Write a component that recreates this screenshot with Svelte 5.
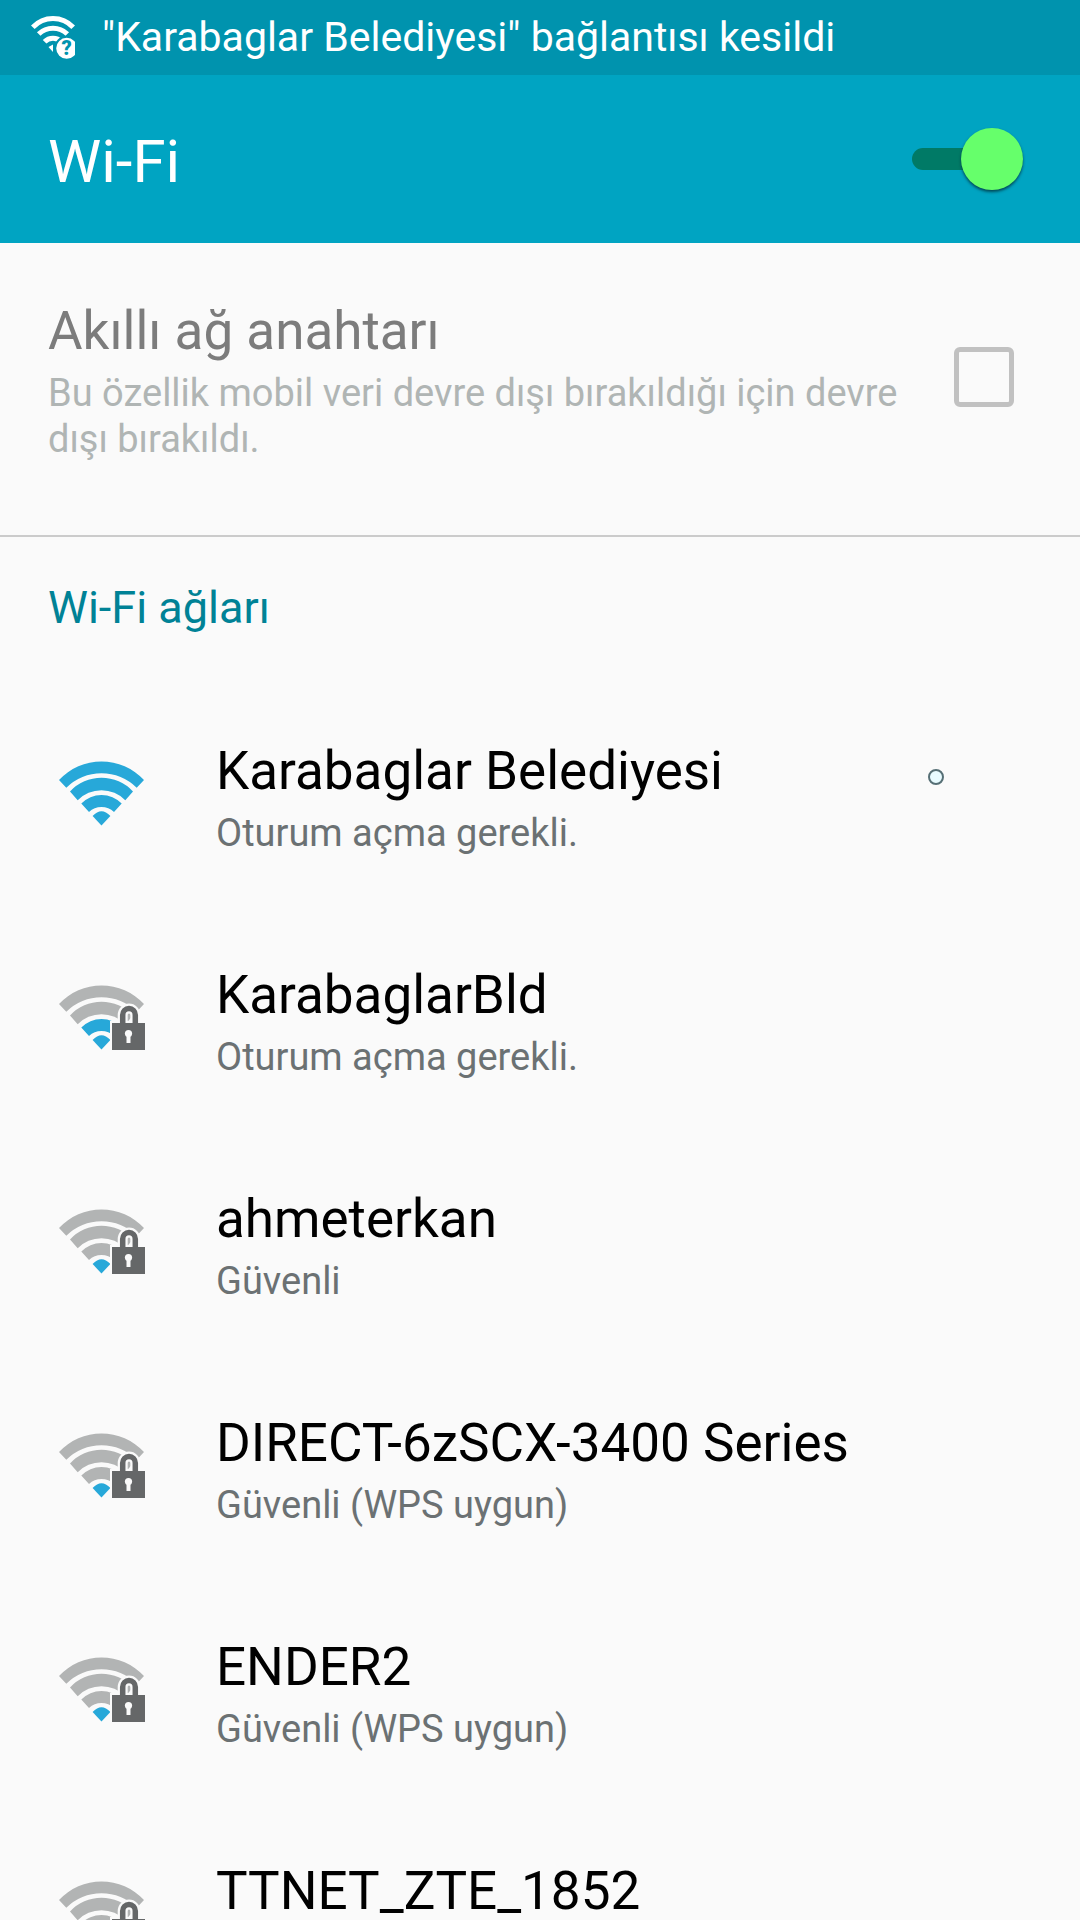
<script lang="ts">
  type Network = {
    name: string,
    status?: string,
    level: number,
    locked: boolean,
    busy?: boolean };

  const networks: Network[] = [
    { name: 'Karabaglar Belediyesi', status: 'Oturum açma gerekli.', level: 4, locked: false, busy: true },
    { name: 'KarabaglarBld', status: 'Oturum açma gerekli.', level: 2, locked: true },
    { name: 'ahmeterkan', status: 'Güvenli', level: 1, locked: true },
    { name: 'DIRECT-6zSCX-3400 Series', status: 'Güvenli (WPS uygun)', level: 1, locked: true },
    { name: 'ENDER2', status: 'Güvenli (WPS uygun)', level: 1, locked: true },
    { name: 'TTNET_ZTE_1852', level: 1, locked: true },
  ];

  // signal segments, weakest first
  const segments = [
    'M42.5 64.5 L33.6 55 Q42.5 45.5 51.4 55 Z',
    'M22.3 42.5 A28 28 0 0 1 62.7 42.5 L55 51 A18 18 0 0 0 30 51 Z',
    'M11 30.5 A43 43 0 0 1 74 30.5 L66.3 39.3 A33 33 0 0 0 18.7 39.3 Z',
    'M0 19 A58 58 0 0 1 85 19 L77.7 26.8 A50 50 0 0 0 7.3 26.8 Z',
  ];

  let wifiOn = $state(true);
</script>

<div class="screen" lang="tr">
  <div class="ticker" role="status">
    <svg class="ticker-icon" viewBox="0 0 44 44" aria-hidden="true">
      <g fill="none" stroke="#fff" stroke-width="5">
        <path d="M1.8 11.3 A27.6 27.6 0 0 1 42.2 11.3" />
        <path d="M7.7 18 A20.5 20.5 0 0 1 36.3 18" />
        <path d="M13.6 25.8 A11.5 11.5 0 0 1 30.4 25.8" />
      </g>
      <path d="M17.5 31 L22 28.5 V36 Z" fill="#fff" />
      <circle cx="35.7" cy="32.3" r="11.5" fill="#fff" stroke="#0093ae" stroke-width="2" />
      <text x="35.7" y="39.4" text-anchor="middle">?</text>
    </svg>
    <span>"Karabaglar Belediyesi" bağlantısı kesildi</span>
  </div>

  <header>
    <h1><label for="wifi">Wi-Fi</label></h1>
    <input id="wifi" class="switch" type="checkbox" role="switch" bind:checked={wifiOn} />
  </header>

  <main>
    <div class="preference">
      <label class="text" for="smart">
        <span class="title">Akıllı ağ anahtarı</span>
        <span class="summary">Bu özellik mobil veri devre dışı bırakıldığı için devre dışı bırakıldı.</span>
      </label>
      <input id="smart" class="box" type="checkbox" disabled />
    </div>

    <h2>Wi-Fi ağları</h2>

    <ul>
      {#each networks as network}
        <li>
          <button class="network">
            <svg class="signal" viewBox="0 0 88 66" aria-hidden="true">
              {#each segments as d, i}
                <path {d} fill={i < network.level ? '#27a8d9' : '#b2b4b4'} />
              {/each}
              {#if network.locked}
                <g stroke="#fafafa" fill="none">
                  <path d="M63.7 39 V30 A6.3 6.5 0 0 1 76.3 30 V39" stroke-width="10" />
                  <path d="M53 38 H86 V65 H53 Z" fill="#fafafa" stroke-width="4" />
                </g>
                <path d="M63.7 39 V30 A6.3 6.5 0 0 1 76.3 30 V39" fill="none" stroke="#656768" stroke-width="5.5" />
                <path d="M53 38 H86 V65 H53 Z" fill="#656768" />
                <circle cx="69.5" cy="48.5" r="3.6" fill="#fafafa" />
                <path d="M67.5 49 H71.5 V58 H67.5 Z" fill="#fafafa" />
              {/if}
            </svg>
            <span class="text">
              <span class="title">{network.name}</span>
              {#if network.status}
                <span class="summary">{network.status}</span>
              {/if}
            </span>
            {#if network.busy}
              <span class="busy"></span>
            {/if}
          </button>
        </li>
      {/each}
    </ul>
  </main>
</div>

<style>
  :global(body) {
    margin: 0;
    background: #fafafa;
  }

  .screen {
    height: 100vh;
    overflow: hidden;
    background: #fafafa;
    color: #000;
    font-family: Roboto, "Noto Sans", sans-serif;
  }

  .ticker {
    display: flex;
    align-items: center;
    gap: 27px;
    height: 75px;
    padding: 0 31px;
    background: #0093ae;
    color: #fff;
    font-size: 41px;
    line-height: 48px;
    white-space: nowrap;
  }

  .ticker span {
    padding-bottom: 2px;
  }

  .ticker-icon {
    flex: none;
    width: 44px;
    height: 44px;
  }

  .ticker-icon text {
    fill: #0093ae;
    font-size: 20px;
    font-weight: 900;
  }

  header {
    display: flex;
    align-items: center;
    justify-content: space-between;
    height: 168px;
    padding: 0 57px 0 48px;
    background: #00a4c2;
    color: #fff;
  }

  h1 {
    margin: 0;
    padding-top: 5px;
    font-size: 60px;
    font-weight: 400;
    line-height: 72px;
  }

  .switch {
    appearance: none;
    position: relative;
    width: 111px;
    height: 62px;
    margin: 0;
    cursor: pointer;
  }

  .switch::before {
    content: "";
    position: absolute;
    inset: 20px 0;
    border-radius: 11px;
    background: #4d7f89;
  }

  .switch::after {
    content: "";
    position: absolute;
    top: 0;
    left: 0;
    width: 62px;
    height: 62px;
    border-radius: 50%;
    background: #ececec;
    box-shadow: 0 2px 3px rgba(0, 50, 60, 0.8);
  }

  .switch:checked::before {
    background: #007a66;
  }

  .switch:checked::after {
    left: auto;
    right: 0;
    background: #66ff6b;
  }

  .preference {
    display: flex;
    align-items: flex-start;
    gap: 40px;
    padding: 56px 66px 73px 48px;
    border-bottom: 2px solid #cbcbcb;
  }

  .text {
    display: flex;
    flex: 1;
    flex-direction: column;
    gap: 7px;
  }

  .title {
    font-size: 53px;
    line-height: 64px;
  }

  .summary {
    color: #6b7173;
    font-size: 38px;
    line-height: 46px;
  }

  .preference .title {
    color: #7c7c7c;
  }

  .preference .summary {
    color: #b0b5b4;
  }

  .box {
    appearance: none;
    flex: none;
    box-sizing: border-box;
    width: 60px;
    height: 60px;
    margin: 48px 0 0;
    border: 5px solid #c1c1c1;
    border-radius: 6px;
  }

  h2 {
    margin: 0;
    padding: 45px 48px 52px;
    color: #008296;
    font-size: 45px;
    font-weight: 400;
    line-height: 52px;
  }

  ul {
    margin: 0;
    padding: 0;
    list-style: none;
  }

  .network {
    display: flex;
    align-items: flex-start;
    width: 100%;
    min-height: 224px;
    padding: 53px 136px 54px 59px;
    border: none;
    background: none;
    color: inherit;
    font-family: inherit;
    text-align: left;
    cursor: pointer;
  }

  .signal {
    flex: none;
    width: 88px;
    height: 66px;
    margin: 22px 69px 0 0;
  }

  .busy {
    box-sizing: border-box;
    width: 16px;
    height: 16px;
    margin-top: 30px;
    border: 2px solid #566f75;
    border-radius: 50%;
    background: #e8fbff;
  }
</style>
